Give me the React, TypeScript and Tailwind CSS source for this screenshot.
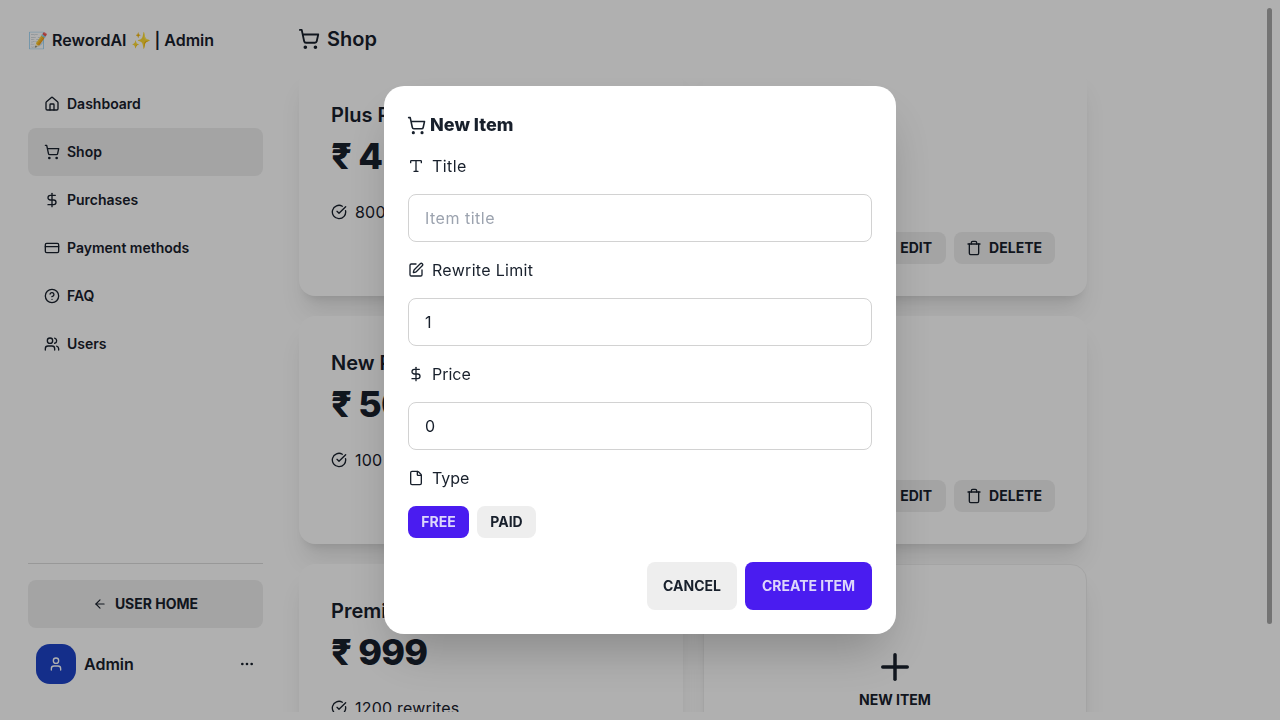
import React from 'react';
import {
    ArrowLeft,
    CircleCheckBig,
    CircleHelp,
    CreditCard,
    DollarSign,
    Ellipsis,
    File,
    House,
    Pencil,
    Plus,
    ShoppingCart,
    SquarePen,
    Trash,
    Type,
    User,
    Users,
} from 'lucide-react';

const menu = [
    { label: 'Dashboard', icon: House },
    { label: 'Shop', icon: ShoppingCart, active: true },
    { label: 'Purchases', icon: DollarSign },
    { label: 'Payment methods', icon: CreditCard },
    { label: 'FAQ', icon: CircleHelp },
    { label: 'Users', icon: Users },
];

const plans = [
    { title: 'Plus Plan', price: '₹ 4', rewrites: '800 rewrites' },
    { title: 'Pro Plan', price: '₹ 699', rewrites: '' },
    { title: 'New Plan', price: '₹ 500', rewrites: '100 rewrites' },
    { title: 'Max Plan', price: '₹ 799', rewrites: '' },
    { title: 'Premium', price: '₹ 999', rewrites: '1200 rewrites' },
];

function PlanCard({ title, price, rewrites }: { title: string; price: string; rewrites: string }) {
    return (
        <div className="h-[228px] rounded-2xl bg-white p-8 pt-[33px] shadow-xl flex flex-col">
            <h2 className="text-xl font-semibold leading-7">{title}</h2>
            <p className="text-4xl font-extrabold tracking-[-0.8px] leading-[48px] mt-[3px]">{price}</p>
            <div className="flex items-center gap-2 mt-5 h-6 tracking-[0.2px]">
                <CircleCheckBig size={16} />
                <span>{rewrites}</span>
            </div>
            <div className="mt-auto flex justify-end gap-2">
                <button className="h-8 pl-3 pr-3.5 rounded-lg bg-[#eeeeee] text-sm font-bold flex items-center gap-[7px]">
                    <Pencil size={16} /> EDIT
                </button>
                <button className="h-8 pl-3 pr-[13px] rounded-lg bg-[#eeeeee] text-sm font-bold flex items-center gap-[7px]">
                    <Trash size={16} /> DELETE
                </button>
            </div>
        </div>
    );
}

function Field({ icon: Icon, label, className, children }: { icon: typeof Type; label: string; className?: string; children: React.ReactNode }) {
    return (
        <>
            <div className={`h-7 flex items-center gap-2 ${className ?? ''}`}>
                <Icon size={16} />
                <span>{label}</span>
            </div>
            {children}
        </>
    );
}

export default function App() {
    return (
        <div className="relative h-screen overflow-hidden bg-white text-[#18202c] font-['Inter',sans-serif]">
            <div className="flex h-full">
                {/* Sidebar */}
                <aside className="w-[283px] shrink-0 pl-7 pr-5 flex flex-col">
                    <div className="h-20 flex items-center font-semibold">
                        <span>📝 RewordAI ✨ | Admin</span>
                    </div>
                    <nav className="flex flex-col">
                        {menu.map((item) => (
                            <a
                                key={item.label}
                                href="#"
                                className={`h-12 px-4 flex items-center gap-[7px] rounded-lg text-sm font-semibold ${item.active ? 'bg-[#eeeeee]' : ''}`}
                            >
                                <item.icon size={16} />
                                {item.label}
                            </a>
                        ))}
                    </nav>
                    <div className="mt-auto pb-9">
                        <div className="border-t border-[#dddddd] mb-4"></div>
                        <button className="h-12 w-full rounded-lg bg-[#eeeeee] text-sm font-bold flex items-center justify-center gap-2">
                            <ArrowLeft size={14} /> USER HOME
                        </button>
                        <div className="flex items-center gap-2 px-2 mt-4">
                            <div className="w-10 h-10 rounded-[14px] bg-[#1d43c8] text-white flex items-center justify-center">
                                <User size={16} />
                            </div>
                            <span className="font-semibold">Admin</span>
                            <Ellipsis size={16} className="ml-auto" />
                        </div>
                    </div>
                </aside>

                {/* Main */}
                <main className="flex-1 min-w-0 h-[712px] flex flex-col">
                    <header className="h-[68px] shrink-0 pl-[15px] pt-[10px] flex items-center gap-[7px] text-xl font-semibold">
                        <ShoppingCart size={22} /> Shop
                    </header>
                    <div className="flex-1 overflow-hidden pl-4">
                        <div className="w-[788px] grid grid-cols-2 gap-5">
                            {plans.map((plan) => (
                                <PlanCard key={plan.title} {...plan} />
                            ))}
                            <div className="h-[228px] rounded-2xl bg-white border border-[#eeeeee] shadow-xl flex flex-col items-center justify-center gap-[2px]">
                                <Plus size={42} />
                                <span className="text-sm font-bold">NEW ITEM</span>
                            </div>
                        </div>
                    </div>
                </main>
            </div>

            {/* Modal */}
            <div className="absolute inset-0 bg-black/[0.31] backdrop-blur-[0.5px] flex items-center justify-center">
                <form className="w-[512px] rounded-[20px] bg-white p-6 shadow-2xl flex flex-col gap-3.5">
                    <h3 className="h-7 pt-0.5 -ml-px flex items-center gap-[4px] text-lg font-extrabold">
                        <ShoppingCart size={19} /> New Item
                    </h3>
                    <Field icon={Type} label="Title" className="tracking-[0.4px]">
                        <input placeholder="Item title" className="h-12 px-4 rounded-lg border border-[#d2d2d2] outline-none tracking-[0.5px] placeholder:text-[#9ca3af]" />
                    </Field>
                    <Field icon={SquarePen} label="Rewrite Limit" className="tracking-[0.3px]">
                        <input defaultValue="1" className="h-12 px-4 rounded-lg border border-[#d2d2d2] outline-none" />
                    </Field>
                    <Field icon={DollarSign} label="Price">
                        <input defaultValue="0" className="h-12 px-4 rounded-lg border border-[#d2d2d2] outline-none" />
                    </Field>
                    <Field icon={File} label="Type">
                        <div className="flex gap-2">
                            <button type="button" className="h-8 w-[61px] rounded-lg bg-[#4a1cf0] text-[#ddd6fb] text-sm font-bold">FREE</button>
                            <button type="button" className="h-8 w-[59px] rounded-lg bg-[#eeeeee] text-sm font-bold">PAID</button>
                        </div>
                    </Field>
                    <div className="mt-2.5 flex justify-end gap-2">
                        <button type="button" className="h-12 w-[90px] rounded-lg bg-[#eeeeee] text-sm font-bold">CANCEL</button>
                        <button type="button" className="h-12 w-[127px] rounded-lg bg-[#4a1cf0] text-[#ddd6fb] text-sm font-bold">CREATE ITEM</button>
                    </div>
                </form>
            </div>

            {/* Scrollbar thumb */}
            <div className="absolute right-2 top-2 w-[5px] h-[616px] rounded-full bg-[#737373]"></div>
        </div>
    );
}
